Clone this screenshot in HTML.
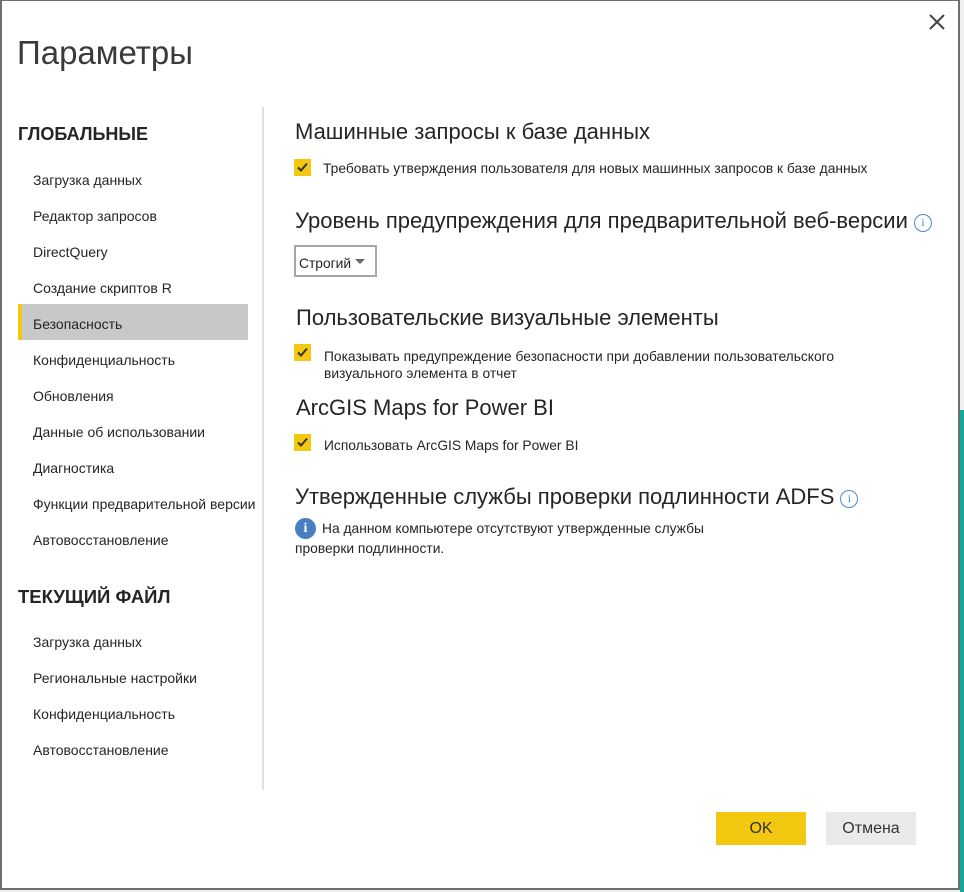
<!DOCTYPE html>
<html><head><meta charset="utf-8"><style>
*{margin:0;padding:0;box-sizing:border-box}
body{width:964px;height:892px;background:#f0f0f0;position:relative;overflow:hidden;font-family:"Liberation Sans","DejaVu Sans",sans-serif;color:#333}
.dlg{position:absolute;left:0;top:0;width:960px;height:890px;background:#fff;border:2px solid #6e6e6e;border-top:1px solid #6e6e6e}
.a{position:absolute;white-space:nowrap}
.teal{position:absolute;left:960px;top:410px;width:4px;height:482px;background:#17a899}
.h{font-size:22px;color:#252525}
.s{font-size:13.8px;color:#252525}
.cb{position:absolute;width:17px;height:17px;background:#f2c811}
.cb svg{position:absolute;left:2px;top:2px}
.nav{font-size:14px;color:#252525;left:33px}
.info{display:inline-block;vertical-align:2px;margin-left:6px;width:18px;height:18px;border:1.5px solid #4a8ad8;border-radius:50%;color:#4a8ad8;font-size:12px;text-align:center;line-height:15px;font-family:"Liberation Serif",serif}
</style></head><body>
<div class="dlg"></div>
<div class="teal"></div>
<svg class="a" style="left:929px;top:14px" width="16" height="16" viewBox="0 0 16 16"><path d="M1 1L15 15M15 1L1 15" stroke="#444" stroke-width="2"/></svg>
<div class="a" style="left:17px;top:34px;font-size:33px;color:#3a3a3a">Параметры</div>
<div class="a" style="left:18px;top:124px;font-size:18px;font-weight:bold;color:#252525">ГЛОБАЛЬНЫЕ</div>
<div class="a" style="left:18px;top:304px;width:230px;height:36px;background:#c8c8c8"></div>
<div class="a" style="left:18px;top:304px;width:4px;height:36px;background:#f2c811"></div>
<div class="a nav" style="top:172px">Загрузка данных</div>
<div class="a nav" style="top:208px">Редактор запросов</div>
<div class="a nav" style="top:244px">DirectQuery</div>
<div class="a nav" style="top:280px">Создание скриптов R</div>
<div class="a nav" style="top:316px">Безопасность</div>
<div class="a nav" style="top:352px">Конфиденциальность</div>
<div class="a nav" style="top:388px">Обновления</div>
<div class="a nav" style="top:424px">Данные об использовании</div>
<div class="a nav" style="top:460px">Диагностика</div>
<div class="a nav" style="top:496px">Функции предварительной версии</div>
<div class="a nav" style="top:532px">Автовосстановление</div>
<div class="a" style="left:18px;top:586px;font-size:18.5px;font-weight:bold;color:#252525">ТЕКУЩИЙ ФАЙЛ</div>
<div class="a nav" style="top:634px">Загрузка данных</div>
<div class="a nav" style="top:670px">Региональные настройки</div>
<div class="a nav" style="top:706px">Конфиденциальность</div>
<div class="a nav" style="top:742px">Автовосстановление</div>
<div class="a" style="left:262px;top:107px;width:2px;height:683px;background:#e0e0e0"></div>

<div class="a h" style="left:295px;top:119px">Машинные запросы к базе данных</div>
<div class="cb" style="left:294px;top:159px"><svg width="13" height="13" viewBox="0 0 13 13"><path d="M2 6.5l3 3 6-7" stroke="#333" stroke-width="2" fill="none"/></svg></div>
<div class="a s" style="left:323px;top:161px">Требовать утверждения пользователя для новых машинных запросов к базе данных</div>
<div class="a h" style="left:295px;top:208px">Уровень предупреждения для предварительной веб-версии<span class="info">i</span></div>
<div class="a" style="left:294px;top:245px;width:83px;height:32px;border:2px solid #a6a6a6"></div>
<div class="a s" style="left:299px;top:256px">Строгий</div>
<div class="a" style="left:355px;top:259px;width:0;height:0;border-left:5px solid transparent;border-right:5px solid transparent;border-top:5px solid #666"></div>
<div class="a h" style="left:296px;top:305px">Пользовательские визуальные элементы</div>
<div class="cb" style="left:294px;top:344px"><svg width="13" height="13" viewBox="0 0 13 13"><path d="M2 6.5l3 3 6-7" stroke="#333" stroke-width="2" fill="none"/></svg></div>
<div class="a s" style="left:324px;top:348px;line-height:17px">Показывать предупреждение безопасности при добавлении пользовательского<br>визуального элемента в отчет</div>
<div class="a h" style="left:296px;top:395px">ArcGIS Maps for Power BI</div>
<div class="cb" style="left:294px;top:434px"><svg width="13" height="13" viewBox="0 0 13 13"><path d="M2 6.5l3 3 6-7" stroke="#333" stroke-width="2" fill="none"/></svg></div>
<div class="a s" style="left:324px;top:438px">Использовать ArcGIS Maps for Power BI</div>
<div class="a h" style="left:295px;top:484px">Утвержденные службы проверки подлинности ADFS<span class="info">i</span></div>
<div class="a" style="left:295px;top:518px;width:21px;height:21px;border-radius:50%;background:#4a7fbf;color:#fff;font-weight:bold;font-size:14px;text-align:center;line-height:21px;font-family:'Liberation Serif',serif">i</div>
<div class="a s" style="left:322px;top:521px">На данном компьютере отсутствуют утвержденные службы</div>
<div class="a s" style="left:295px;top:541px">проверки подлинности.</div>

<div class="a" style="left:716px;top:812px;width:90px;height:33px;background:#f2c811;font-size:16px;text-align:center;line-height:33px;color:#333">OK</div>
<div class="a" style="left:826px;top:812px;width:90px;height:33px;background:#eaeaea;font-size:16px;text-align:center;line-height:33px;color:#333">Отмена</div>
</body></html>
